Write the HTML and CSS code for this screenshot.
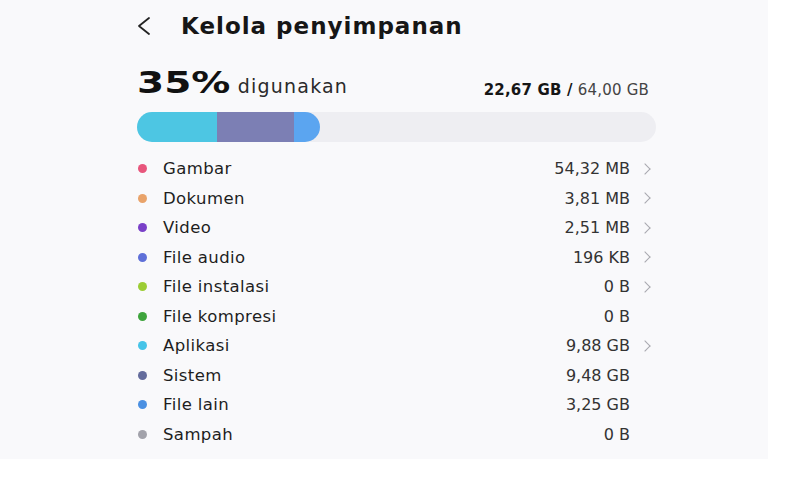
FILE: index.html
```html
<!DOCTYPE html>
<html lang="id">
<head>
    <meta charset="UTF-8">
    <meta name="viewport" content="width=device-width, initial-scale=1.0">
    <title>Kelola penyimpanan</title>
    <link rel="stylesheet" href="styles.css">
</head>
<body>
    <div class="screen">
        <header class="header">
            <span class="back">
                <svg width="16" height="20" viewBox="0 0 16 20">
                    <polyline points="13,2 3,10 13,18" fill="none" stroke="#222" stroke-width="1.8" stroke-linecap="round" stroke-linejoin="round"/>
                </svg>
            </span>
            <h1>Kelola penyimpanan</h1>
        </header>

        <section class="summary">
            <div class="used">
                <span class="percent">35%</span>
                <span class="used-label">digunakan</span>
            </div>
            <div class="total"><b>22,67 GB /</b> 64,00 GB</div>
        </section>

        <div class="bar">
            <div class="seg seg-apps"></div>
            <div class="seg seg-system"></div>
            <div class="seg seg-other"></div>
        </div>

        <ul class="list">
            <li class="row"><span class="dot" style="background:#e8567c"></span><span class="name">Gambar</span><span class="size">54,32 MB</span><span class="chev"></span></li>
            <li class="row"><span class="dot" style="background:#e9a36a"></span><span class="name">Dokumen</span><span class="size">3,81 MB</span><span class="chev"></span></li>
            <li class="row"><span class="dot" style="background:#7a40c8"></span><span class="name">Video</span><span class="size">2,51 MB</span><span class="chev"></span></li>
            <li class="row"><span class="dot" style="background:#5f70d8"></span><span class="name">File audio</span><span class="size">196 KB</span><span class="chev"></span></li>
            <li class="row"><span class="dot" style="background:#9ccd34"></span><span class="name">File instalasi</span><span class="size">0 B</span><span class="chev"></span></li>
            <li class="row"><span class="dot" style="background:#3ea43c"></span><span class="name">File kompresi</span><span class="size">0 B</span><span class="no-chev"></span></li>
            <li class="row"><span class="dot" style="background:#46c4e8"></span><span class="name">Aplikasi</span><span class="size">9,88 GB</span><span class="chev"></span></li>
            <li class="row"><span class="dot" style="background:#646c9c"></span><span class="name">Sistem</span><span class="size">9,48 GB</span><span class="no-chev"></span></li>
            <li class="row"><span class="dot" style="background:#4b90e2"></span><span class="name">File lain</span><span class="size">3,25 GB</span><span class="no-chev"></span></li>
            <li class="row"><span class="dot" style="background:#a2a2aa"></span><span class="name">Sampah</span><span class="size">0 B</span><span class="no-chev"></span></li>
        </ul>
    </div>
</body>
</html>
```

FILE: styles.css
```css
body {
    margin: 0;
    padding: 0;
    background-color: #ffffff;
    font-family: "DejaVu Sans", Inter, "Liberation Sans", sans-serif;
    color: #1c1c1c;
}

.screen {
    width: 768px;
    height: 459px;
    box-sizing: border-box;
    background-color: #f9f9fb;
    padding: 0 112px 0 137px;
}

.header {
    height: 52px;
    display: flex;
    align-items: center;
}

.back {
    width: 16px;
    height: 20px;
    margin-left: -1px;
    margin-right: 29px;
    display: flex;
}

.header h1 {
    margin: 0;
    font-size: 23px;
    font-weight: 700;
    letter-spacing: 1px;
    color: #161616;
}

.summary {
    margin-top: 13px;
    height: 37px;
    display: flex;
    justify-content: space-between;
    align-items: baseline;
}

.used {
    display: flex;
    align-items: baseline;
}

/* the device font has very wide digits */
.percent {
    display: inline-block;
    font-size: 30px;
    font-weight: 700;
    color: #111;
    transform: scaleX(1.3);
    transform-origin: left center;
    margin-right: 29px;
}

.used-label {
    font-size: 19px;
    letter-spacing: 1.2px;
    color: #2a2a2a;
}

.total {
    font-size: 15px;
    letter-spacing: 0.2px;
    color: #444;
    padding-right: 7px;
    position: relative;
    top: 2px;
}

.total b {
    color: #161616;
}

.bar {
    margin-top: 10px;
    height: 30px;
    border-radius: 15px;
    background-color: #eeeef2;
    display: flex;
    overflow: hidden;
}

.seg {
    height: 100%;
}

.seg-apps {
    width: 80px;
    background-color: #4dc6e3;
}

.seg-system {
    width: 77px;
    background-color: #7c7fb4;
}

.seg-other {
    width: 26px;
    background-color: #5ba5f0;
    border-radius: 0 15px 15px 0;
}

.list {
    list-style: none;
    margin: 12px 0 0;
    padding: 0;
}

.row {
    height: 29.5px;
    display: flex;
    align-items: center;
    font-size: 16.5px;
}

.dot {
    width: 9px;
    height: 9px;
    border-radius: 50%;
    margin-left: 1px;
    margin-right: 16px;
}

.name {
    flex: 1;
    letter-spacing: 0.4px;
    color: #1e1e1e;
}

.size {
    font-size: 16px;
    color: #333;
}

.chev, .no-chev {
    width: 8px;
    height: 12px;
    margin-left: 14px;
    margin-right: 4px;
}

.chev {
    position: relative;
}

.chev::before {
    content: "";
    position: absolute;
    left: -3px;
    top: 2px;
    width: 7px;
    height: 7px;
    border-top: 1.3px solid #a8a8ae;
    border-right: 1.3px solid #a8a8ae;
    transform: rotate(45deg);
}
```
